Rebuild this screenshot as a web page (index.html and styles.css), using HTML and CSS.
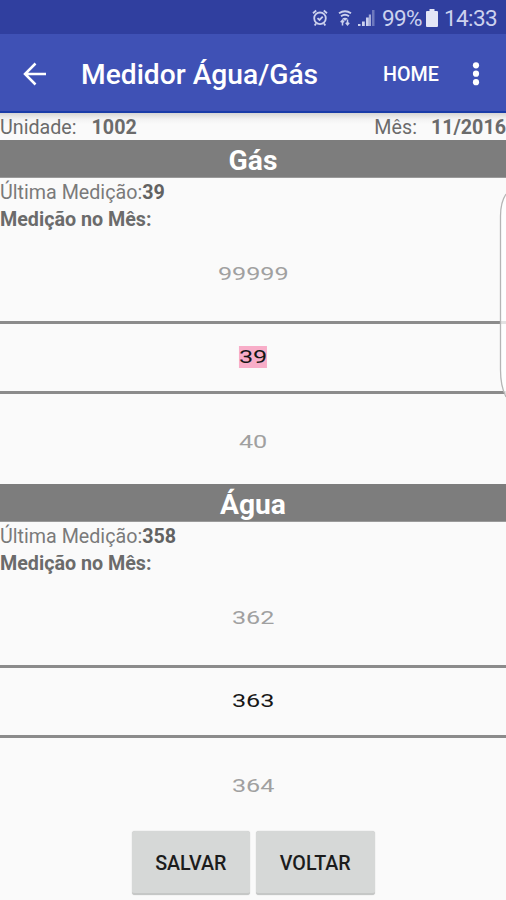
FILE: index.html
```
<!DOCTYPE html>
<html lang="pt-BR">
<head>
<meta charset="utf-8">
<title>Medidor Água/Gás</title>
<link rel="stylesheet" href="styles.css">
</head>
<body>
<div class="screen">
  <header class="statusbar">
    <svg class="alarm" width="16" height="18" viewBox="0 0 16 18" fill="none" stroke="currentColor" stroke-width="1.8">
      <circle cx="8" cy="9.3" r="5.8"/><path d="M1 4.2 4.2 1.5M15 4.2 11.8 1.5M4 14.5 2.7 16.5M12 14.5 13.3 16.5M5.5 9.2 7.5 11 10.7 7.7"/>
    </svg>
    <svg class="wifi" width="14" height="18" viewBox="0 0 14 18" fill="none" stroke="currentColor" stroke-width="1.8">
      <path d="M1 4.3Q7 .2 13 4.3M3 7.2Q7 4.3 11 7.2"/><path d="M4.3 9.5Q7 7.8 9.7 9.5L7 12Z" fill="currentColor" stroke="none"/><path d="M4.5 16.5V11.5M2.7 13.3 4.5 11.3 6 13.3M9.5 10.5V15.5M7.8 13.8 9.5 15.8 11.2 13.8" stroke-width="1.5"/>
    </svg>
    <svg class="signal" width="17" height="18" viewBox="0 0 17 18" fill="currentColor">
      <path d="M0 15h2.5v2H0zM4 12.5h2.8V17H4zM8 8.5h2.8V17H8z"/><path d="M10.8 5.5h2.2V17h-2.2z" opacity=".75"/><path d="M14 1h2.5v16H14z" opacity=".4"/>
    </svg>
    <span class="percent">99%</span>
    <svg class="battery" width="12" height="18" viewBox="0 0 12 18" fill="currentColor"><path d="M3.5 0h5v2H11q1 0 1 1v14q0 1-1 1H1q-1 0-1-1V3q0-1 1-1h2.5z"/></svg>
    <span class="clock">14:33</span>
  </header>
  <nav class="appbar">
    <svg class="back" width="24" height="24" viewBox="0 0 24 24" fill="none" stroke="currentColor" stroke-width="2.5"><path d="M23 12H2.5M12.5 1.5 2 12l10.5 10.5"/></svg>
    <h1 class="title">Medidor Água/Gás</h1>
    <span class="home">HOME</span>
    <svg class="more" width="8" height="24" viewBox="0 0 8 24" fill="currentColor"><circle cx="4" cy="3.3" r="3.1"/><circle cx="4" cy="11.7" r="3.1"/><circle cx="4" cy="20.2" r="3.1"/></svg>
  </nav>
  <div class="unit">
    <span>Unidade:</span><b class="unit-number">1002</b>
    <span class="month">Mês:</span><b class="date">11/2016</b>
  </div>
  <section class="meter">
    <h2 class="band">Gás</h2>
    <p class="line last">Última Medição:<b>39</b></p>
    <p class="line strong">Medição no Mês:</p>
    <div class="picker">
      <div class="cell before"><span class="num">99999</span></div>
      <div class="cell current"><span class="num selected">39</span></div>
      <div class="cell after"><span class="num">40</span></div>
    </div>
  </section>
  <section class="meter">
    <h2 class="band">Água</h2>
    <p class="line last">Última Medição:<b>358</b></p>
    <p class="line strong">Medição no Mês:</p>
    <div class="picker">
      <div class="cell before"><span class="num">362</span></div>
      <div class="cell current"><span class="num">363</span></div>
      <div class="cell after"><span class="num">364</span></div>
    </div>
  </section>
  <div class="actions"><button class="btn">SALVAR</button><button class="btn">VOLTAR</button></div>
  <svg class="edge-handle" width="7" height="212" viewBox="0 0 7 212"><path d="M7 4Q1.5 12 1.5 26V180Q1.5 196 7 207Z" fill="#fff" fill-opacity=".75"/><path d="M7 4Q1.5 12 1.5 26V180Q1.5 196 7 207" fill="none" stroke="#b5b5b5" stroke-width="1.3"/></svg>
</div>
</body>
</html>
```

FILE: styles.css
```
* { box-sizing: border-box; }
body { margin: 0; font-family: Roboto, "Liberation Sans", sans-serif; }
h1, h2, p { margin: 0; }
.screen { position: relative; width: 506px; height: 900px; overflow: hidden; background: #fafafa; color: #6b6b6b; }
.statusbar { display: flex; align-items: center; justify-content: flex-end; height: 34px; padding: 2px 9px 0 0; background: #303f9f; color: #ccd1ee; font-size: 22.5px; line-height: 32px; white-space: nowrap; }
.alarm { margin-right: 10px; }
.wifi { margin-right: 6px; }
.signal { margin-right: 7px; }
.percent { width: 39px; letter-spacing: -.6px; margin-right: 5px; }
.battery { margin-right: 6px; color: #e4e6f6; }
.clock { width: 53px; letter-spacing: -.6px; }
.appbar { display: flex; align-items: center; height: 79px; padding: 3px 26px 0 23px; background: #3f51b5; border-bottom: 2px solid #1a3ca8; color: #fff; }
.title { width: 302px; margin-left: 34px; padding-top: 2px; font-size: 28.2px; font-weight: 500; line-height: 36px; white-space: nowrap; }
.home { width: 57px; padding-top: 1px; font-size: 19.7px; font-weight: 500; }
.more { margin-left: 32px; }
.unit { display: flex; height: 27px; font-size: 19.7px; line-height: 29px; background: linear-gradient(#d6d6d4, #f2f2f2 6px, #fafafa 11px); white-space: nowrap; }
.unit-number { margin-left: 15px; }
.month { margin-left: auto; }
.date { margin-left: 14px; }
.meter { height: 344px; }
.band { height: 37.5px; background: #7d7d7d; border-bottom: 1px solid #9a9a9a; color: #fff; font-size: 28.2px; font-weight: 700; line-height: 42px; text-align: center; }
.line { height: 27px; font-size: 19.7px; line-height: 29px; }
.last { color: #7a7a7a; }
.last b { color: #626262; }
.strong { font-weight: 700; }
.picker { display: grid; grid-template-rows: 89px 73px 91px; }
.cell { display: flex; align-items: center; justify-content: center; color: #a0a0a0; font-size: 18px; line-height: 22px; }
.before { padding-bottom: 5px; }
.current { border-top: 3px solid #8b8b8b; border-bottom: 3px solid #8b8b8b; color: #161616; }
.after { padding-top: 5px; }
.num { transform: scaleX(1.4); }
.selected { background: #f8adc8; }
.actions { display: flex; justify-content: center; gap: 6px; padding-top: 3px; }
.btn { width: 118.5px; height: 64px; padding: 2px 0 0; border: 0; border-bottom: 2px solid #c5c7c6; border-radius: 3px; background: #d6d8d7; box-shadow: 0 0 1px #bbb; color: #1c1c1c; font: 500 19.7px Roboto, "Liberation Sans", sans-serif; }
.edge-handle { position: absolute; right: 0; top: 190px; }
```
